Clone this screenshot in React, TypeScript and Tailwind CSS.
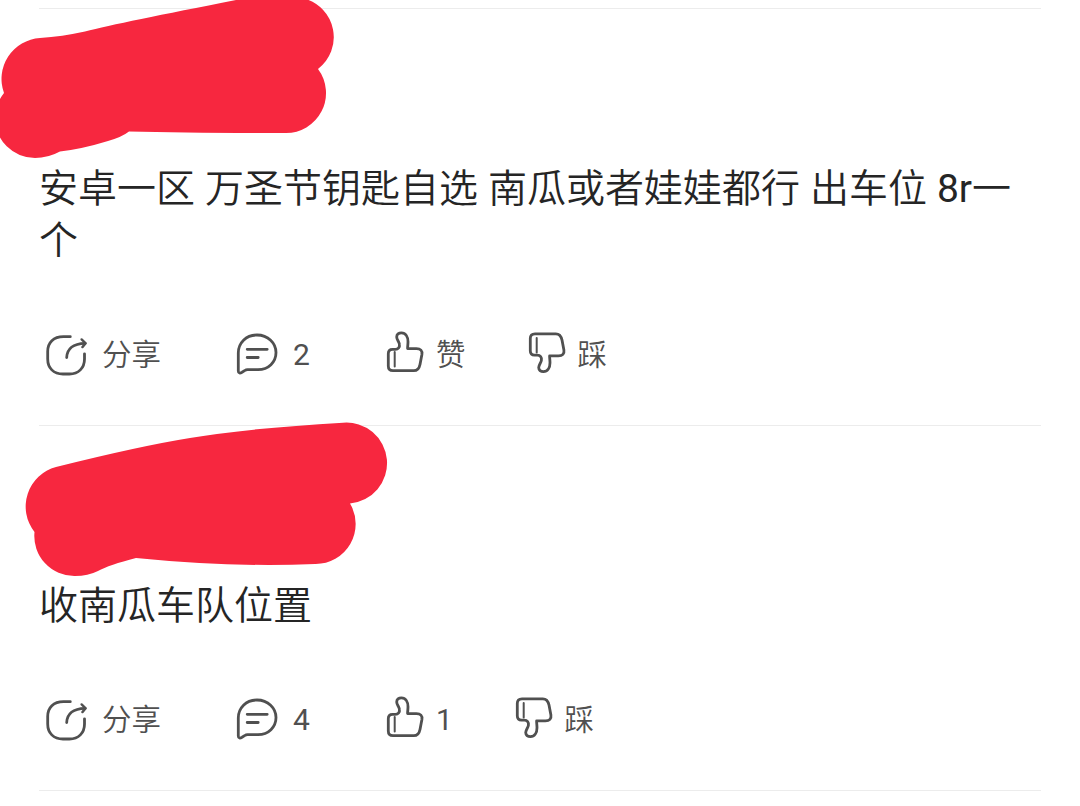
import { ReactNode } from "react";

type Post = {
    id: number;
    text: string;
    comments: string;
    likes: string;
};

const posts: Post[] = [
    {
        id: 1,
        text: "安卓一区 万圣节钥匙自选 南瓜或者娃娃都行 出车位 8r一个",
        comments: "2",
        likes: "赞",
    },
    { id: 2, text: "收南瓜车队位置", comments: "4", likes: "1" },
];

const THUMB =
    "M7.3 25.7C7.3 22.7 8.7 21.3 11.5 21.3H14.3C17.3 21.3 18.9 19.4 18.4 16.2C18.1 13.8 15.7 11.6 15.7 8.9C15.7 6.4 17.7 4.8 20.4 4.8C24.7 4.8 27 8.9 27 13.8C27 16.4 26.6 18.4 26.6 20.6H35.4C39.6 20.6 41.5 22.8 40.9 26.4L39 36.4C38.1 40.8 36.4 42.7 32.8 42.7H12C8.8 42.7 7.3 41.2 7.3 38Z";

function Icon({ viewBox = "0 0 48 48", children }: { viewBox?: string; children: ReactNode }) {
    return (
        <svg
            viewBox={viewBox}
            className="size-12 shrink-0"
            fill="none"
            stroke="currentColor"
            strokeWidth={2.8}
            strokeLinecap="round"
            strokeLinejoin="round"
        >
            {children}
        </svg>
    );
}

function ShareIcon() {
    return (
        <Icon>
            <path d="M28.3 5.7H21.5C11.5 5.7 5.7 11.5 5.7 20.5V28C5.7 37 11.5 43 21 43H27.4C36.5 43 42.5 37 42.5 28V22.8" />
            <path d="M24.7 26.5C25 18 31 12.5 43 12.3" />
            <path d="M39.6 8.4L43.7 12.3L40.4 16.1" strokeWidth={2.4} />
        </Icon>
    );
}

function CommentIcon() {
    return (
        <Icon>
            <path d="M14.5 38.7H25C35.5 38.7 43 31 43 21.5S35 4 24 4 5.3 12 5.3 22V40C5.3 42.3 7 42.5 9 41.3L12 39.4Q13 38.7 14.5 38.7Z" />
            <path d="M14.2 18.3H34.2M14.2 26.5H25.2" />
        </Icon>
    );
}

function LikeIcon() {
    return (
        <Icon viewBox="0 3 48 48">
            <path d={THUMB} />
            <path d="M13.7 24V38.5" strokeWidth={2} />
        </Icon>
    );
}

function DislikeIcon() {
    return (
        <Icon viewBox="0 3 48 48">
            <g transform="matrix(1 0 0 -1 0 48.5)">
                <path d={THUMB} />
                <path d="M13.7 24V38.5" strokeWidth={2} />
            </g>
        </Icon>
    );
}

function PostItem({ post }: { post: Post }) {
    return (
        <article className="border-t border-[#ececec] pt-[154px] pb-[46px]">
            <p className="text-[39px] leading-[52px] text-[#252525] [word-spacing:0.3px]">{post.text}</p>
            <div className="mt-[64px] ml-[3px] flex h-12 items-center text-[29.5px] leading-12 text-[#505050]">
                <button className="flex items-center gap-3">
                    <ShareIcon />
                    <span className="w-[58px] whitespace-nowrap">分享</span>
                </button>
                <button className="ml-[73px] flex items-center gap-3">
                    <CommentIcon />
                    <span className="w-[17px] text-[30px]">{post.comments}</span>
                </button>
                <button className="ml-[71px] flex items-center gap-[7px]">
                    <LikeIcon />
                    <span>{post.likes}</span>
                </button>
                <button className="ml-[57px] flex items-center gap-[7px]">
                    <DislikeIcon />
                    <span>踩</span>
                </button>
            </div>
        </article>
    );
}

// red marker strokes hiding the user names
function Scribbles() {
    return (
        <svg
            viewBox="0 0 1080 806"
            className="pointer-events-none absolute top-0 left-0 h-[806px] w-[1080px]"
            fill="#f7273f"
        >
            <path d="M4 93A41 41 0 0 1 40 38Q62 36.5 85 31.5C110 25 160 15 236 0L293 -3L304 -1.5A40 40 0 0 1 318 69A40 40 0 0 1 285 133Q190 133 129 131.5Q122 137 108 141Q82 149 60 151.5Q48 158 35 158A40 40 0 0 1 -5 118Q-4 103 4 93Z" />
            <path d="M34.5 532A41 41 0 0 1 56 467Q140 446 190 438Q250 428 343 422.7A40.5 40.5 0 0 1 350 503.5A40 40 0 0 1 315 564Q230 567.5 136 558Q109 565 98 571Q88 576 75 576A40 40 0 0 1 34.5 532Z" />
        </svg>
    );
}

export default function App() {
    return (
        <main className="relative h-[806px] w-[1080px] overflow-hidden bg-white pt-2 pr-[39px] pl-[39px] font-[Roboto,'Noto_Sans_CJK_SC_DemiLight','Noto_Sans_CJK_SC',sans-serif]">
            {posts.map((post) => (
                <PostItem key={post.id} post={post} />
            ))}
            <hr className="border-[#ececec]" />
            <Scribbles />
        </main>
    );
}
